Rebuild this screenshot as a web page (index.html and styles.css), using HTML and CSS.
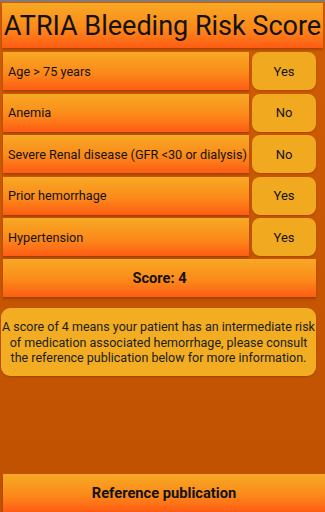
FILE: index.html
```html
<!DOCTYPE html>
<html lang="en">
<head>
<meta charset="UTF-8">
<meta name="viewport" content="width=device-width, initial-scale=1.0">
<title>ATRIA Bleeding Risk Score</title>
<link rel="stylesheet" href="styles.css">
</head>
<body>

<div class="screen">
    <!-- Title -->
    <h1 class="title">ATRIA Bleeding Risk Score</h1>

    <!-- Risk factors -->
    <div class="factors">
        <div class="row">
            <div class="label">Age &gt; 75 years</div>
            <div class="answer">Yes</div>
        </div>
        <div class="row">
            <div class="label">Anemia</div>
            <div class="answer">No</div>
        </div>
        <div class="row">
            <div class="label">Severe Renal disease (GFR &lt;30 or dialysis)</div>
            <div class="answer">No</div>
        </div>
        <div class="row">
            <div class="label">Prior hemorrhage</div>
            <div class="answer">Yes</div>
        </div>
        <div class="row">
            <div class="label">Hypertension</div>
            <div class="answer">Yes</div>
        </div>
    </div>

    <div class="score">Score: 4</div>

    <div class="info">A score of 4 means your patient has an intermediate risk<br>of medication associated hemorrhage, please consult<br>the reference publication below for more information.</div>

    <div class="spacer"></div>

    <div class="reference">Reference publication</div>
</div>

</body>
</html>
```

FILE: styles.css
```css
/* Basic Reset */
* {
    margin: 0;
    padding: 0;
    box-sizing: border-box;
}

body {
    font-family: Roboto, "Liberation Sans", sans-serif;
    color: #141210;
    background: #c45403;
}

.screen {
    width: 325px;
    height: 512px;
    display: flex;
    flex-direction: column;
    border-top: 2px solid #867a74;
    background: linear-gradient(180deg, #d05c05, #bf5101);
    overflow: hidden;
}

/* Orange gradient bars */
.title,
.label,
.score,
.reference {
    background: linear-gradient(180deg, #f7a924 0%, #fb8a1a 55%, #ff5c14 100%);
    box-shadow: 0 2px 2px rgba(90, 30, 0, 0.35);
}

.title {
    margin: 1px 2px 0 2px;
    height: 45px;
    font-size: 27.1px;
    font-weight: 400;
    line-height: 47px;
    text-align: center;
    white-space: nowrap;
    letter-spacing: -0.05px;
}

/* Risk factor rows */
.factors {
    display: flex;
    flex-direction: column;
    gap: 3.6px;
    margin-top: 4px;
}

.row {
    display: flex;
    align-items: stretch;
    height: 38px;
}

.label {
    width: 246px;
    margin-left: 3px;
    padding-left: 5px;
    display: flex;
    align-items: center;
    font-size: 12.7px;
    white-space: nowrap;
}

.answer {
    width: 64px;
    margin-left: 3px;
    border-radius: 8px;
    background: #f1aa1f;
    box-shadow: 0 1px 2px rgba(90, 30, 0, 0.3);
    display: flex;
    align-items: center;
    justify-content: center;
    font-size: 13px;
}

.score {
    margin: 3px 9px 0 3px;
    height: 38px;
    display: flex;
    align-items: center;
    justify-content: center;
    font-size: 14.6px;
    font-weight: bold;
}

.info {
    margin: 11px 9px 0 1px;
    height: 68px;
    border-radius: 9px;
    background: #f2ad23;
    box-shadow: 0 1px 2px rgba(90, 30, 0, 0.3);
    display: flex;
    align-items: center;
    justify-content: center;
    text-align: center;
    font-size: 12.5px;
    line-height: 15.5px;
    white-space: nowrap;
    color: #211d16;
}

.spacer {
    flex: 1;
}

.reference {
    margin-left: 3px;
    height: 38px;
    flex-shrink: 0;
    display: flex;
    align-items: center;
    justify-content: center;
    font-size: 14.7px;
    font-weight: bold;
}
```
